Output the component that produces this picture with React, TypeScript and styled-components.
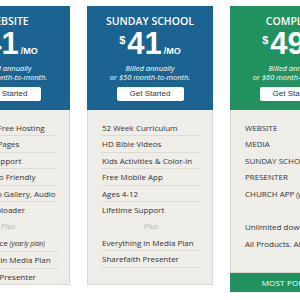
import React from "react";
import styled, { createGlobalStyle } from "styled-components";

type Feature = { text: string; note?: string; kind?: "plus" | "blank"; line?: boolean };

const plans: {
  title: string;
  price: string;
  month: string;
  popular?: boolean;
  features: Feature[];
}[] = [
  {
    title: "Website",
    price: "41",
    month: "$50",
    features: [
      { text: "Unlimited Free Hosting", line: true },
      { text: "Unlimited Pages", line: true },
      { text: "Lifetime Support", line: true },
      { text: "Social Video Friendly", line: true },
      { text: "Blog, Photo Gallery, Audio", line: true },
      { text: "Sermon Uploader" },
      { text: "Plus", kind: "plus" },
      { text: "Email Service", note: "(yearly plan)", line: true },
      { text: "Everything in Media Plan", line: true },
      { text: "Sharefaith Presenter", line: true },
    ],
  },
  {
    title: "Sunday School",
    price: "41",
    month: "$50",
    features: [
      { text: "52 Week Curriculum", line: true },
      { text: "HD Bible Videos", line: true },
      { text: "Kids Activities & Color-in", line: true },
      { text: "Free Mobile App", line: true },
      { text: "Ages 4-12", line: true },
      { text: "Lifetime Support" },
      { text: "Plus", kind: "plus" },
      { text: "Everything in Media Plan", line: true },
      { text: "Sharefaith Presenter", line: true },
    ],
  },
  {
    title: "Complete",
    price: "49",
    month: "$60",
    popular: true,
    features: [
      { text: "WEBSITE" },
      { text: "MEDIA" },
      { text: "SUNDAY SCHOOL" },
      { text: "PRESENTER" },
      { text: "CHURCH APP", note: "(yearly plan)" },
      { text: "", kind: "blank" },
      { text: "Unlimited downloads" },
      { text: "All Products. All Access." },
    ],
  },
];

export default function App() {
  return (
    <>
      <GlobalStyle />
      <Wrapper>
        {plans.map((p) => (
          <Card key={p.title}>
            <Header $popular={p.popular}>
              <Title>{p.title}</Title>
              <Price>
                <Dollar>$</Dollar>
                {p.price}
                <Per>/MO</Per>
              </Price>
              <Billed>
                Billed annually
                <br />
                or {p.month} month-to-month.
              </Billed>
              <StartButton>Get Started</StartButton>
            </Header>
            <Features $popular={p.popular}>
              {p.features.map((f, i) =>
                f.kind === "plus" ? (
                  <PlusRow key={i}>{f.text}</PlusRow>
                ) : (
                  <Row key={i} $line={f.line}>
                    {f.kind === "blank" ? "\u00a0" : f.text}
                    {f.note && <Note> {f.note}</Note>}
                  </Row>
                )
              )}
            </Features>
            {p.popular && <Badge>Most Popular</Badge>}
          </Card>
        ))}
      </Wrapper>
    </>
  );
}

const GlobalStyle = createGlobalStyle`
  html, body {
    margin: 0;
    padding: 0;
    background: #fff;
  }
  #root {
    width: 300px;
    height: 300px;
    overflow: hidden;
  }
`;

const Wrapper = styled.div`
  display: flex;
  align-items: flex-start;
  gap: 17px;
  padding-top: 6px;
  margin-left: -56px;
  width: max-content;
`;

const Card = styled.div`
  width: 126px;
  display: flex;
  flex-direction: column;
`;

const Header = styled.div<{ $popular?: boolean }>`
  background: ${(p) => (p.$popular ? "#21925f" : "#1b6491")};
  color: #fff;
  text-align: center;
  padding: 8px 0 9px;
  height: 104px;
  box-sizing: border-box;
`;

const Title = styled.div`
  font: 600 10.5px/14px "Open Sans", sans-serif;
  text-transform: uppercase;
  white-space: nowrap;
`;

const Price = styled.div`
  margin-top: 1px;
  font: bold 31px/30px "Liberation Sans", Arial, sans-serif;
  height: 30px;
  white-space: nowrap;
`;

const Dollar = styled.span`
  font-size: 11px;
  line-height: 1;
  vertical-align: 10px;
  margin-right: 2px;
`;

const Per = styled.span`
  font-size: 9px;
  line-height: 1;
  margin-left: 2px;
`;

const Billed = styled.div`
  margin-top: 5px;
  font: italic 7.5px/9px "Open Sans", sans-serif;
  white-space: nowrap;
`;

const StartButton = styled.div`
  margin: 5px auto 0;
  width: 67px;
  height: 14px;
  border-radius: 2px;
  background: #fff;
  color: #333;
  font: 8px/14px "Liberation Sans", Arial, sans-serif;
`;

const Features = styled.div<{ $popular?: boolean }>`
  background: #eeede8;
  border: 1px solid #d9d8d2;
  border-top: none;
  padding: 10px 12px 0 13px;
  box-sizing: border-box;
  height: ${(p) => (p.$popular ? "163px" : "175px")};
`;

const Row = styled.div<{ $line?: boolean }>`
  font: 8px/15.4px "Open Sans", sans-serif;
  color: #333;
  padding-left: 1px;
  border-bottom: 1px solid ${(p) => (p.$line ? "#dcdbd4" : "transparent")};
  white-space: nowrap;
`;

const PlusRow = styled(Row)`
  text-align: center;
  font-style: italic;
  color: #b8b7b1;
`;

const Note = styled.span`
  font-size: 6.5px;
  font-style: italic;
`;

const Badge = styled.div`
  background: #21925f;
  color: #fff;
  height: 19px;
  font: 8px/19px "Open Sans", sans-serif;
  text-transform: uppercase;
  text-align: center;
  letter-spacing: 0.2px;
`;
